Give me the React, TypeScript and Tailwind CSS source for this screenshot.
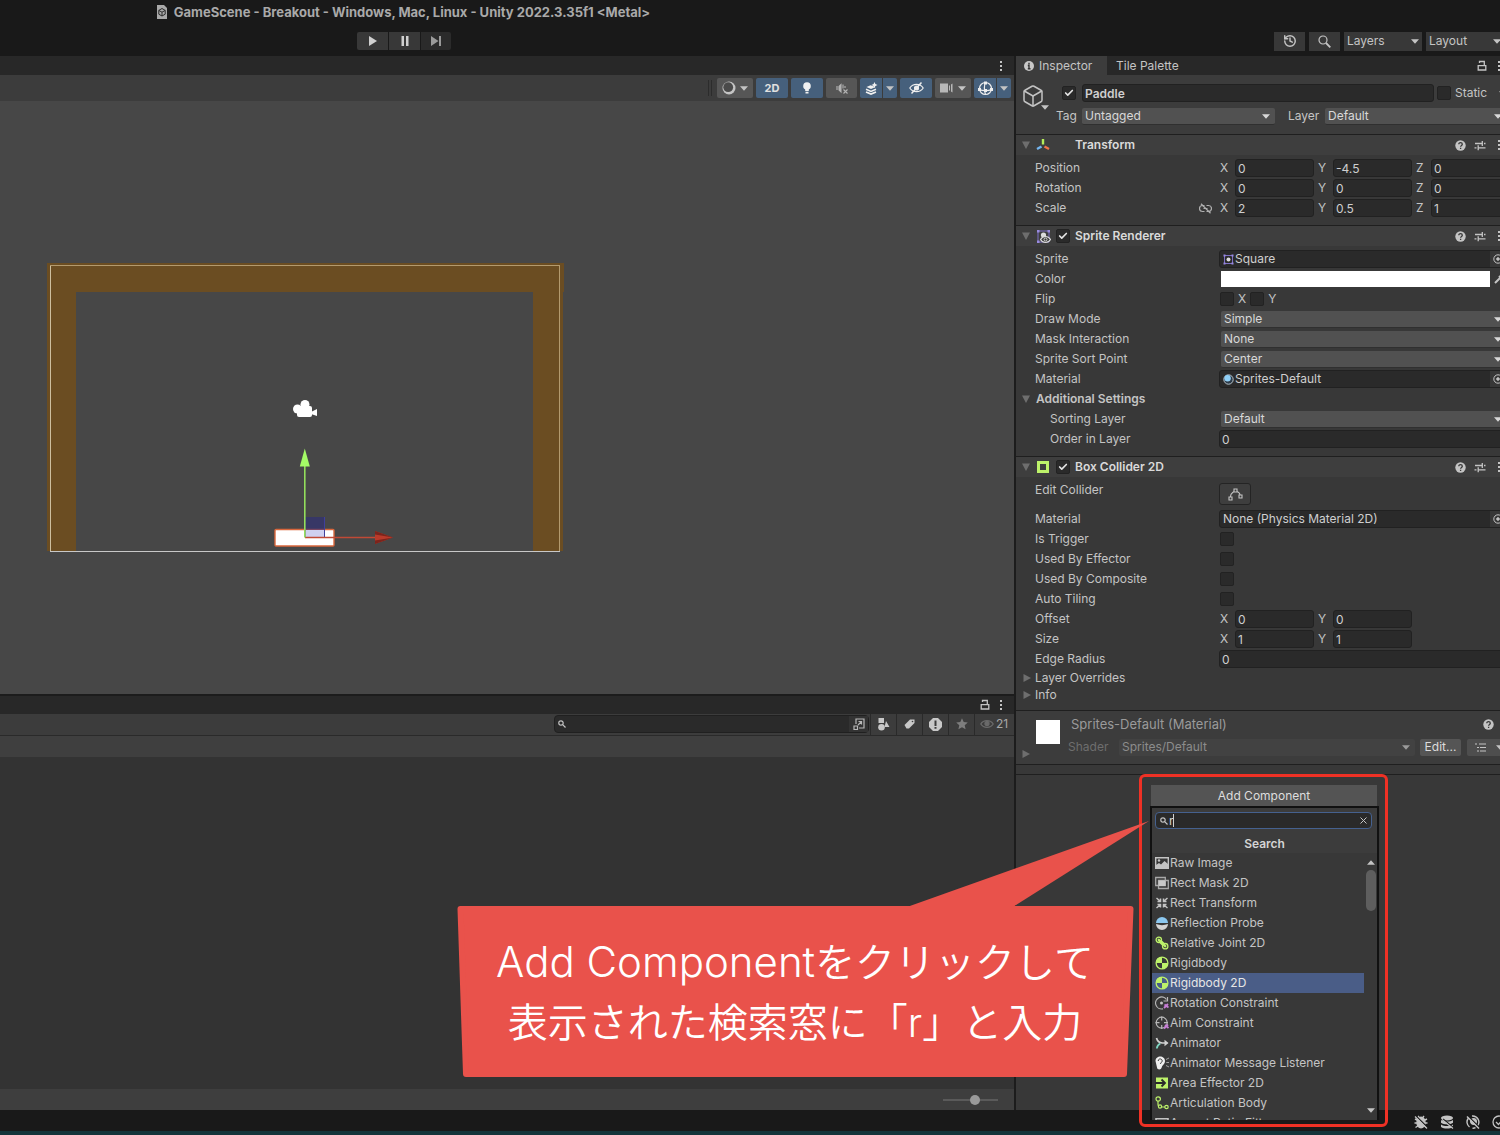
import type { ReactNode } from "react";
import { Box, Check, History } from "lucide-react";

/* ---------- small shared icons ---------- */

function Caret({ className = "" }: { className?: string }) {
  return (
    <svg className={`h-[5px] w-[8px] shrink-0 ${className}`} viewBox="0 0 8 5" fill="currentColor">
      <path d="M0 0.3h8L4 4.8z" />
    </svg>
  );
}

function Dots() {
  return (
    <svg className="h-[12px] w-[4px] shrink-0" viewBox="0 0 4 12" fill="currentColor">
      <rect x="1" y="1" width="2" height="2" />
      <rect x="1" y="5" width="2" height="2" />
      <rect x="1" y="9" width="2" height="2" />
    </svg>
  );
}

function Lock() {
  return (
    <svg className="h-[11px] w-[10px] shrink-0" viewBox="0 0 10 11" fill="none" stroke="currentColor" strokeWidth="1.3">
      <path d="M1.200 5.700h7.600v4.300H1.200z" />
      <path d="M2.500 3V1.500h4.800v4" />
    </svg>
  );
}

function Fold({ open = false }: { open?: boolean }) {
  return (
    <svg className="h-[10px] w-[10px] shrink-0 text-[#6e6e6e]" viewBox="0 0 10 10" fill="currentColor">
      {open ? <path d="M1 1.5h8L5 9z" /> : <path d="M1.5 1v8L9 5z" />}
    </svg>
  );
}

function HelpIcon() {
  return (
    <svg className="h-[11px] w-[11px]" viewBox="0 0 11 11">
      <circle cx="5.5" cy="5.5" r="5.2" fill="#c4c4c4" />
      <path d="M3.8 4.3c0-2.3 3.5-2.2 3.5 0 0 1.2-1.7 1.1-1.7 2.5M5.6 7.8v1.1" fill="none" stroke="#383838" strokeWidth="1.3" />
    </svg>
  );
}

function PresetIcon() {
  return (
    <svg className="h-[11px] w-[12px]" viewBox="0 0 12 11" fill="none" stroke="#c4c4c4" strokeWidth="1.3">
      <path d="M1 3.5h7M10 3.5h1.5M8.3 1v5M0.5 7.8h2M4.5 7.8h7M4.2 5.3v5" />
    </svg>
  );
}

function TinySearch() {
  return (
    <svg className="h-[8px] w-[8px] shrink-0" viewBox="0 0 8 8" fill="none" stroke="#c4c4c4" strokeWidth="1.2">
      <circle cx="3" cy="3" r="2.2" />
      <path d="M4.7 4.7L7.5 7.5" />
    </svg>
  );
}

function UnlinkIcon() {
  return (
    <svg className="h-[11px] w-[13px]" viewBox="0 0 13 11" fill="none" stroke="#b0b0b0" strokeWidth="1.2">
      <path d="M5.500 2.500H3.500a3 3 0 0 0 0 6h2M7.500 2.500h2a3 3 0 0 1 0 6h-2M4.500 5.500h4M2 0.800l9.500 9.400" />
    </svg>
  );
}

function SpriteIcon() {
  return (
    <svg className="h-[11px] w-[11px] shrink-0" viewBox="0 0 11 11">
      <path d="M1.5 1.5h8v8h-8z" fill="none" stroke="#7d6fc4" />
      <path d="M0.500 0.500h2v2h-2zM8.500 0.500h2v2h-2zM0.500 8.500h2v2h-2zM8.500 8.500h2v2h-2z" fill="#9a8be0" />
      <circle cx="5.5" cy="5.5" r="2" fill="#dcdcdc" />
    </svg>
  );
}

/* ---------- form controls ---------- */

function Tick({ id, checked = false, label }: { id: string; checked?: boolean; label?: string }) {
  return (
    <span className="relative inline-flex h-[14px] w-[14px] shrink-0">
      <input
        id={id}
        type="checkbox"
        aria-label={label}
        defaultChecked={checked}
        className="peer h-[14px] w-[14px] appearance-none rounded-[2px] border border-[#222222] bg-[#2a2a2a]"
      />
      <Check
        className="pointer-events-none absolute top-[2px] left-[2px] hidden h-[10px] w-[10px] text-[#e4e4e4] peer-checked:block"
        strokeWidth={4}
      />
    </span>
  );
}

function Dropdown({ id, value, label, className = "" }: { id: string; value: string; label?: string; className?: string }) {
  return (
    <span className={`relative flex h-[17px] items-center text-[#d8d8d8] ${className}`}>
      <select
        id={id}
        aria-label={label}
        className="h-[17px] w-full appearance-none rounded-[2px] border-b border-[#303030] bg-[#515151] pl-[3px] leading-[15px]"
      >
        <option>{value}</option>
      </select>
      <Caret className="pointer-events-none absolute right-[5px]" />
    </span>
  );
}

function TextBox({ id, value, label, className = "" }: { id: string; value: string; label?: string; className?: string }) {
  return (
    <input
      id={id}
      aria-label={label}
      defaultValue={value}
      className={`h-[18px] rounded-[3px] border border-[#212121] bg-[#2a2a2a] pl-[2px] text-[#cfcfcf] ${className}`}
    />
  );
}

function ObjectField({ id, value, icon }: { id: string; value: string; icon?: ReactNode }) {
  return (
    <span className="flex h-[18px] flex-1 rounded-[3px] border border-[#212121] bg-[#2a2a2a]">
      <span className="flex flex-1 items-center gap-px pl-[3px] text-[#cfcfcf]">
        {icon}
        {value}
      </span>
      <button id={id} aria-label={`Select ${value}`} className="flex w-[16px] items-center justify-center bg-[#373737]">
        <svg className="h-[10px] w-[10px]" viewBox="0 0 10 10" fill="none" stroke="#c4c4c4">
          <circle cx="5" cy="5" r="4.2" />
          <circle cx="5" cy="5" r="1.3" fill="#c4c4c4" />
        </svg>
      </button>
    </span>
  );
}

function Row({ id, label, indent = false, children }: { id: string; label: string; indent?: boolean; children: ReactNode }) {
  return (
    <div className="flex h-5 items-center pr-[5px] pl-[19px]">
      <label htmlFor={id} className={indent ? "w-[184px] shrink-0 pl-[15px]" : "w-[184px] shrink-0"}>
        {label}
      </label>
      {children}
    </div>
  );
}

function VectorRow({ id, label, values, linked = false }: { id: string; label: string; values: string[]; linked?: boolean }) {
  return (
    <div className="flex h-5 items-center pl-[19px]">
      <span className="flex w-[184px] shrink-0 items-center justify-between pr-[7px]">
        {label}
        {linked && <UnlinkIcon />}
      </span>
      <div className="flex gap-1 pl-px">
        {values.map((value, i) => (
          <div key={i} className="flex items-center">
            <label htmlFor={`${id}-${i}`} className="w-[15px]">
              {"XYZ"[i]}
            </label>
            <TextBox id={`${id}-${i}`} value={value} className="w-[79px]" />
          </div>
        ))}
      </div>
    </div>
  );
}

function Section({ title, icon, toggle, children }: { title: string; icon: ReactNode; toggle?: string; children: ReactNode }) {
  return (
    <section className="border-t border-[#1f1f1f] pb-[7px]">
      <header className="mb-[3px] flex h-5 items-center bg-[#3e3e3e] pl-[5px]">
        <Fold open />
        <span className="ml-[5px] flex w-[18px] items-center">{icon}</span>
        <span className="ml-[2px] flex w-[19px]">{toggle && <Tick id={toggle} checked label={`Enable ${title}`} />}</span>
        <h2 className="font-semibold text-[#dadada]">{title}</h2>
        <div className="ml-auto flex items-center gap-[8px] pr-[11px]">
          <HelpIcon />
          <PresetIcon />
          <span className="ml-[3px] flex">
            <Dots />
          </span>
        </div>
      </header>
      {children}
    </section>
  );
}

/* ---------- top bar ---------- */

function TopBar() {
  return (
    <header className="overflow-x-clip bg-[#191919] text-[#c4c4c4]">
      <div className="flex h-6 w-[806px] items-center justify-center gap-[6px] text-[13px] font-bold text-[#a9a9a9]">
        <svg className="h-[14px] w-[12px]" viewBox="0 0 12 14">
          <path d="M1 0h7l3 3v11H1z" fill="#a9a9a9" />
          <path d="M6 3.500l3.200 1.900v3.800L6 11 2.800 9.200V5.400zM6 7.200V11M6 7.200L2.800 5.400M6 7.200l3.200-1.800" fill="none" stroke="#2a2a2a" />
        </svg>
        <h1>GameScene - Breakout - Windows, Mac, Linux - Unity 2022.3.35f1 &lt;Metal&gt;</h1>
      </div>
      <div className="flex h-8 items-center justify-between pt-0.5">
        <div className="flex w-[808px] justify-center gap-px">
          <button aria-label="Play" className="flex h-[18px] w-[31px] items-center justify-center rounded-l-[2px] bg-[#383838]">
            <svg className="h-[10px] w-[10px]" viewBox="0 0 10 10" fill="#d0d0d0">
              <path d="M1 0l8 5-8 5z" />
            </svg>
          </button>
          <button aria-label="Pause" className="flex h-[18px] w-[31px] items-center justify-center bg-[#383838]">
            <svg className="h-[10px] w-[10px]" viewBox="0 0 10 10" fill="#d0d0d0">
              <path d="M1.500 0h2.500v10H1.500zM6 0h2.500v10H6z" />
            </svg>
          </button>
          <button aria-label="Step" className="flex h-[18px] w-[30px] items-center justify-center rounded-r-[2px] bg-[#2b2b2b]">
            <svg className="h-[10px] w-[12px]" viewBox="0 0 12 10" fill="#9a9a9a">
              <path d="M1 0l7.500 5L1 10zM9 0h2v10H9z" />
            </svg>
          </button>
        </div>
        <div className="mr-[-4px] flex shrink-0 gap-1">
          <button aria-label="Undo history" className="flex h-[19px] w-[31px] items-center justify-center bg-[#383838]">
            <History className="h-[14px] w-[14px]" strokeWidth={2.5} />
          </button>
          <button aria-label="Search" className="flex h-[19px] w-[31px] items-center justify-center bg-[#383838]">
            <svg className="h-[13px] w-[13px]" viewBox="0 0 13 13" fill="none" stroke="#c4c4c4">
              <circle cx="5" cy="5" r="4" strokeWidth="1.200" />
              <path d="M8 8l4.300 4.300" strokeWidth="1.800" />
            </svg>
          </button>
          {["Layers", "Layout"].map((name) => (
            <span key={name} className="relative flex w-[78px] items-center">
              <select aria-label={name} className="h-[19px] w-full appearance-none bg-[#383838] pl-[3px]">
                <option>{name}</option>
              </select>
              <Caret className="pointer-events-none absolute right-[3px]" />
            </span>
          ))}
        </div>
      </div>
    </header>
  );
}

/* ---------- scene view ---------- */

function SceneToolbar() {
  return (
    <div className="flex h-[26px] items-center justify-end gap-[3px] bg-[#3c3c3c] pr-[3px] text-[#c4c4c4]">
      <span className="mr-[2px] h-[16px] w-[4px] border-x border-[#2c2c2c]" />
      <button aria-label="Draw mode" className="flex h-5 w-[36px] items-center justify-center gap-1 rounded-[2px] bg-[#565656]">
        <svg className="h-[14px] w-[14px]" viewBox="0 0 14 14">
          <circle cx="7" cy="7" r="6.500" fill="#c4c4c4" />
          <circle cx="6.200" cy="6.200" r="4.900" fill="#4a4a4a" />
        </svg>
        <Caret />
      </button>
      <button className="h-5 w-[32px] rounded-[2px] bg-[#46607c] text-[11px] font-bold text-[#e0e0e0]">2D</button>
      <button aria-label="Lighting" className="flex h-5 w-[32px] items-center justify-center rounded-[2px] bg-[#46607c]">
        <svg className="h-[12px] w-[10px]" viewBox="0 0 10 12" fill="#f0f0f0">
          <circle cx="5" cy="4" r="3.800" />
          <path d="M3.200 6h3.600v3H3.200zM3.500 9.800h3v1.800h-3z" />
        </svg>
      </button>
      <button aria-label="Audio" className="flex h-5 w-[31px] items-center justify-center rounded-[2px] bg-[#565656]">
        <svg className="h-[11px] w-[12px]" viewBox="0 0 12 11" fill="none" stroke="#b4b4b4" strokeWidth="1.100">
          <path d="M1 3v4M3 3.500l2-2v7.500l-2-2z" fill="#b4b4b4" />
          <path d="M7 1.500v4M7.500 6.500l4 4M11.500 6.500l-4 4M9 3v2" />
        </svg>
      </button>
      <div className="flex gap-px">
        <button aria-label="Effects" className="flex h-5 w-[22px] items-center justify-center rounded-l-[2px] bg-[#46607c]">
          <svg className="h-[13px] w-[13px]" viewBox="0 0 13 13" fill="none" stroke="#f0f0f0" strokeWidth="1.600">
            <path d="M5.500 3.200L1.500 5 6 7l4.500-2z" fill="#f0f0f0" stroke="none" />
            <path d="M1 7.200l5 2.200 5-2.200M1 9.900l5 2.200 5-2.200" />
            <path d="M9.500 0l.9 2.100 2.100.9-2.100.9-.9 2.100-.9-2.100L6.500 3l2.100-.9z" fill="#f0f0f0" stroke="none" />
          </svg>
        </button>
        <button aria-label="Effects options" className="flex h-5 w-[14px] items-center justify-center rounded-r-[2px] bg-[#46607c]">
          <Caret />
        </button>
      </div>
      <button aria-label="Scene visibility" className="flex h-5 w-[32px] items-center justify-center rounded-[2px] bg-[#46607c]">
        <svg className="h-[12px] w-[15px]" viewBox="0 0 15 12" fill="none" stroke="#eeeeee" strokeWidth="1.200">
          <path d="M0.800 6C4 1.200 11 1.200 14.200 6 11 10.800 4 10.800 0.800 6z" />
          <circle cx="7.500" cy="6" r="2" fill="#eeeeee" />
          <path d="M2.500 11.500l10-11" strokeWidth="1.500" />
        </svg>
      </button>
      <button aria-label="Scene camera" className="flex h-5 w-[36px] items-center justify-center gap-[5px] rounded-[2px] bg-[#565656]">
        <svg className="h-[10px] w-[13px]" viewBox="0 0 13 10" fill="#b8b8b8">
          <path d="M0 0.500h8v9H0zM9 3l1-1v6L9 7zM11 1.500l1.500-1v9l-1.500-1z" />
        </svg>
        <Caret />
      </button>
      <div className="flex gap-px">
        <button aria-label="Gizmos" className="flex h-5 w-[22px] items-center justify-center rounded-l-[2px] bg-[#46607c]">
          <svg className="h-[15px] w-[15px]" viewBox="0 0 15 15" fill="none" stroke="#eeeeee" strokeWidth="1.200">
            <circle cx="7.500" cy="7.500" r="6" />
            <path d="M1.500 8.500c3 1.500 9 1.500 12 0M7.500 1.500c-1.500 2-1.500 8 0 12" />
            <path d="M6 0.500h3v3H6zM0 7h3v3H0zM12 7h3v3h-3zM6 8h3v3H6z" fill="#eeeeee" stroke="none" />
          </svg>
        </button>
        <button aria-label="Gizmo options" className="flex h-5 w-[14px] items-center justify-center rounded-r-[2px] bg-[#46607c]">
          <Caret />
        </button>
      </div>
    </div>
  );
}

function SceneCanvas() {
  return (
    <svg className="min-h-[480px] w-full flex-[592_1_0px] bg-[#474747]">
      {/* walls */}
      <path d="M47 162h517v29h-1v259h-30V191H76v259H47z" fill="#6b4d22" />
      {/* camera bounds */}
      <path d="M50 164.500h510M559.500 165v285" stroke="#b39a6e" />
      <path d="M50 450.500h510" stroke="#c8c8c8" />
      <path d="M50.500 165v285" stroke="#cdbf9f" />
      {/* camera gizmo */}
      <g fill="#ffffff">
        <circle cx="305" cy="303.500" r="4.500" />
        <circle cx="297.500" cy="308" r="4.500" />
        <rect x="297" y="305" width="15" height="11" rx="2" />
        <path d="M311 311l6-3v7l-6-2z" />
      </g>
      {/* paddle and move handles */}
      <rect x="275" y="428.500" width="59" height="16.500" rx="1" fill="#ffffff" stroke="#d9673c" strokeWidth="1.400" />
      <rect x="305" y="416" width="20" height="20" fill="#2a2a80" fillOpacity="0.550" />
      <rect x="306" y="429" width="18" height="7" fill="#cfd0f0" />
      <path d="M324.500 416v20" stroke="#3f3f9c" />
      <path d="M305 436.500h72" stroke="#c04a36" strokeWidth="1.600" />
      <path d="M375 430l18 6.500-18 6.500z" fill="#b93a2a" />
      <path d="M375 430l18 6.500-18-3zM375 443l18-6.500-18 3z" fill="#7c241c" />
      <path d="M304.800 436.500V364" stroke="#93dd5c" strokeWidth="1.600" />
      <path d="M304.800 347.500l5 18h-10z" fill="#a4fb66" />
    </svg>
  );
}

/* ---------- project browser ---------- */

function ProjectPanel() {
  return (
    <>
      <div className="flex h-[20px] items-center justify-end gap-[9px] border-t-2 border-[#1c1c1c] bg-[#282828] pr-[11px] text-[#c4c4c4]">
        <Lock />
        <Dots />
      </div>
      <div className="flex h-[22px] items-center justify-end border-b border-[#2a2a2a] bg-[#3c3c3c] text-[#c4c4c4]">
        <div className="mr-px flex h-[18px] w-[315px] items-center gap-1 rounded-[4px] border border-[#202020] bg-[#2a2a2a] pl-[3px]">
          <TinySearch />
          <input aria-label="Search project" className="h-[16px] min-w-0 flex-1" />
          <button aria-label="Open search window" className="flex h-[16px] w-[19px] items-center justify-center bg-[#333333]">
            <svg className="h-[12px] w-[12px]" viewBox="0 0 12 12" fill="none" stroke="#b8b8b8" strokeWidth="1.200">
              <path d="M3 6V1h8v9H6M1 8h3.500v3.500H1zM5 7l3.500-3.500M5.500 3.500h3v3" />
            </svg>
          </button>
        </div>
        <button aria-label="Filter by type" className="flex h-[21px] w-[26px] items-center justify-center border-l border-[#2a2a2a]">
          <svg className="h-[13px] w-[13px]" viewBox="0 0 13 13" fill="#c8c8c8">
            <path d="M1.500 0H7v5H1.500zM9 3l3.500 6H7.500z" />
            <circle cx="4.500" cy="9.300" r="3.300" />
          </svg>
        </button>
        <button aria-label="Filter by label" className="flex h-[21px] w-[26px] items-center justify-center border-l border-[#2a2a2a]">
          <svg className="h-[10px] w-[11px]" viewBox="0 0 11 10">
            <path d="M0.500 6L6 0.500h4.500V4L5 9.500H2.500z" fill="#c8c8c8" />
            <circle cx="8.500" cy="2.500" r="0.800" fill="#3c3c3c" />
          </svg>
        </button>
        <button aria-label="Filter by log" className="flex h-[21px] w-[26px] items-center justify-center border-l border-[#2a2a2a]">
          <svg className="h-[13px] w-[13px]" viewBox="0 0 13 13">
            <path d="M4 0h5l4 4v5l-4 4H4L0 9V4z" fill="#c8c8c8" />
            <path d="M5.500 2.500h2V8h-2zM5.500 9h2v1.800h-2z" fill="#3c3c3c" />
          </svg>
        </button>
        <button aria-label="Favorites" className="flex h-[21px] w-[26px] items-center justify-center border-l border-[#2a2a2a]">
          <svg className="h-[12px] w-[12px]" viewBox="0 0 12 12" fill="#7d7d7d">
            <path d="M6 0.300l1.700 3.800 4.100.4-3.100 2.700.9 4.100L6 9.200l-3.600 2.100.9-4.100L.2 4.500l4.100-.4z" />
          </svg>
        </button>
        <button className="flex h-[21px] w-[40px] items-center gap-[2px] border-l border-[#2a2a2a] pl-[5px] text-[#a8a8a8]">
          <svg className="h-[10px] w-[14px]" viewBox="0 0 14 10" fill="none" stroke="#6a6a6a" strokeWidth="1.300">
            <path d="M0.800 5C3.500.5 10.500.5 13.200 5 10.500 9.500 3.500 9.500.8 5z" />
            <circle cx="7" cy="4.500" r="2" fill="#6a6a6a" />
          </svg>
          21
        </button>
      </div>
      <div className="h-[21px] bg-[#3f3f3f]" />
      <div className="flex-[332_1_0px] bg-[#333333]" />
      <div className="flex h-[21px] items-center justify-end bg-[#3e3e3e] pr-[16px]">
        <input
          type="range"
          aria-label="Icon size"
          defaultValue={60}
          className="h-[10px] w-[55px] appearance-none bg-transparent [&::-webkit-slider-runnable-track]:h-[2px] [&::-webkit-slider-runnable-track]:bg-[#5a5a5a] [&::-webkit-slider-thumb]:mt-[-4px] [&::-webkit-slider-thumb]:h-[10px] [&::-webkit-slider-thumb]:w-[10px] [&::-webkit-slider-thumb]:appearance-none [&::-webkit-slider-thumb]:rounded-full [&::-webkit-slider-thumb]:bg-[#9a9a9a]"
        />
      </div>
    </>
  );
}

/* ---------- add component menu ---------- */

const lime = "#bdf26a";

const components: { name: string; icon: ReactNode }[] = [
  {
    name: "Raw Image",
    icon: (
      <>
        <path d="M0.700 1.700h12.600v10.600H0.700z" fill="none" stroke="#c4c4c4" strokeWidth="1.400" />
        <path d="M1 12V9l3-2 2 1.500L9.500 5 13 8v4z" fill="#c4c4c4" />
        <circle cx="4" cy="4.500" r="1.200" fill="#c4c4c4" />
      </>
    ),
  },
  {
    name: "Rect Mask 2D",
    icon: (
      <>
        <path d="M0.700 1.500h9.600v8H0.700zM3.500 4.500h9.800v8H3.500z" fill="none" stroke="#a8a8a8" strokeWidth="1.300" />
        <path d="M3.500 4.500h7v5.500h-7z" fill="#c8c8c8" />
      </>
    ),
  },
  {
    name: "Rect Transform",
    icon: (
      <path
        d="M1.500 2l3.500 3M12.500 2L9 5M1.500 12L5 9M12.500 12L9 9M5.500 2.500v3h-3M8.500 2.500v3h3M5.500 11.500v-3h-3M8.500 11.500v-3h3"
        fill="none"
        stroke="#c4c4c4"
        strokeWidth="1.500"
      />
    ),
  },
  {
    name: "Reflection Probe",
    icon: (
      <>
        <path d="M1 7a6 6 0 0 1 12 0z" fill="#8cc8f0" />
        <path d="M1 8c4 1.500 8 1.500 12 0a6 6 0 0 1-12 0z" fill="#d4d4d4" />
      </>
    ),
  },
  {
    name: "Relative Joint 2D",
    icon: (
      <>
        <path d="M4 4l6 6" stroke={lime} strokeWidth="3.500" />
        <circle cx="3.800" cy="3.800" r="2.700" fill="#383838" stroke={lime} strokeWidth="1.300" />
        <circle cx="10.200" cy="10.200" r="2.700" fill="#383838" stroke={lime} strokeWidth="1.300" />
        <path d="M3.800 3.800l6.400 6.400" stroke={lime} strokeWidth="2.400" strokeLinecap="round" />
      </>
    ),
  },
  { name: "Rigidbody", icon: <BodyGlyph /> },
  { name: "Rigidbody 2D", icon: <BodyGlyph /> },
  {
    name: "Rotation Constraint",
    icon: (
      <>
        <path d="M11.500 3.500A6 6 0 1 0 8 12.800" fill="none" stroke="#b8b8b8" strokeWidth="1.200" />
        <path d="M12.500 1v4H8.500" fill="none" stroke="#b8b8b8" strokeWidth="1.200" />
        <circle cx="6.500" cy="7" r="1.500" fill="#c4c4c4" />
        <path d="M9 12l4-4M9.500 8.500l4 3" stroke="#c77fd6" strokeWidth="1.800" />
      </>
    ),
  },
  {
    name: "Aim Constraint",
    icon: (
      <>
        <circle cx="6.700" cy="6.700" r="5.500" fill="none" stroke="#b8b8b8" strokeWidth="1.200" />
        <path d="M6.700 0.500v4M6.700 9v4M0.500 6.700h4M9 6.700h4" stroke="#b8b8b8" strokeWidth="1.200" />
        <path d="M9 12.500l4-4M10 9l3.500 3" stroke="#c77fd6" strokeWidth="1.800" />
      </>
    ),
  },
  {
    name: "Animator",
    icon: (
      <>
        <path d="M1.500 2c1 3.500 3 5 6 5h5" fill="none" stroke="#d0d0d0" strokeWidth="1.700" />
        <path d="M9.500 3.800L13.500 7l-4 3.200z" fill="#d0d0d0" />
        <path d="M1.800 12.500c.3-2.500 1.500-4 3.500-5" fill="none" stroke="#7fd6c2" strokeWidth="1.800" />
      </>
    ),
  },
  {
    name: "Animator Message Listener",
    icon: (
      <>
        <path d="M0.500 5c0-6 9.500-6 9.500 0 0 3-2.800 4-3.300 6.500-.6 2.800-4.700 2.200-4.700 0z" fill="#eeeeee" />
        <path d="M3.200 5c0-3 4.200-2.500 4 0-.2 1.500-1.700 1.500-1.700 3" fill="none" stroke="#383838" />
        <path d="M11 3.500l3-1.500M11.300 6.500h2.700M11 9.500l3 1.500" stroke="#a0a0a0" />
      </>
    ),
  },
  {
    name: "Area Effector 2D",
    icon: (
      <>
        <path d="M1 1.500h12v11H1z" fill={lime} />
        <path d="M0 7h9.500M6.500 3.500L10 7l-3.500 3.500" fill="none" stroke="#2b2b2b" strokeWidth="1.800" />
      </>
    ),
  },
  {
    name: "Articulation Body",
    icon: (
      <>
        <path d="M3 4v4.500c0 1.500 1 2.500 3 2.500h4" fill="none" stroke={lime} strokeWidth="1.200" />
        <circle cx="3.200" cy="3" r="2.200" fill="#383838" stroke={lime} strokeWidth="1.200" />
        <circle cx="5" cy="10.500" r="1.600" fill="#383838" stroke={lime} strokeWidth="1.200" />
        <circle cx="11.500" cy="11" r="1.700" fill="#383838" stroke={lime} strokeWidth="1.200" />
      </>
    ),
  },
  { name: "Aspect Ratio Fitter", icon: <path d="M1 2.700h12v9H1z" fill="none" stroke="#c4c4c4" strokeWidth="1.600" /> },
];

function BodyGlyph() {
  return (
    <>
      <circle cx="7" cy="7" r="5.900" fill="none" stroke={lime} strokeWidth="1.300" />
      <path d="M7 7V1a6 6 0 0 0-6 6zM7 7v6a6 6 0 0 0 6-6z" fill={lime} />
    </>
  );
}

function AddComponent() {
  return (
    <div className="relative z-10 mx-auto mt-[10px] w-[226px]">
      <button className="block h-[21px] w-full bg-[#545454] text-[#dedede]">Add Component</button>
      <div className="absolute top-full left-[-1px] flex h-[314px] w-[229px] flex-col border-2 border-b-0 border-[#111111] bg-[#383838]">
        <div className="bg-[#3c3c3c] pt-[4px]">
          <label className="relative mr-[5px] ml-[3px] flex h-[17px] items-center rounded-[4px] border border-[#45618f] bg-[#2a2a2a] px-[4px]">
            <TinySearch />
            <input aria-label="Search components" defaultValue="r" className="h-[15px] min-w-0 flex-1 pl-px text-[#d8d8d8]" />
            <span className="absolute left-[17px] h-[13px] w-px bg-[#d0d0d0]" />
            <button aria-label="Clear search" className="flex">
              <svg className="h-[7px] w-[7px]" viewBox="0 0 7 7" stroke="#c4c4c4">
                <path d="M0.500 0.500l6 6M6.500 0.500l-6 6" />
              </svg>
            </button>
          </label>
          <h3 className="flex h-[24px] items-center justify-center pt-[6px] font-semibold text-[#d4d4d4]">Search</h3>
        </div>
        <div className="flex min-h-0 flex-1">
          <ul className="flex-1 overflow-hidden">
            {components.map((item) => (
              <li key={item.name}>
                <button
                  className={
                    item.name === "Rigidbody 2D"
                      ? "flex h-5 w-full items-center gap-px bg-[#4a5d87] pl-[3px] text-[#e6e6e6]"
                      : "flex h-5 w-full items-center gap-px pl-[3px] text-[#c4c4c4]"
                  }
                >
                  <svg className="h-[14px] w-[14px] shrink-0" viewBox="0 0 14 14">
                    {item.icon}
                  </svg>
                  {item.name}
                </button>
              </li>
            ))}
          </ul>
          <div className="flex w-[13px] flex-col items-center gap-[5px] py-[7px] text-[#c4c4c4]">
            <Caret className="rotate-180" />
            <span className="h-[41px] w-[10px] rounded-[5px] bg-[#5e5e5e]" />
            <Caret className="mt-auto" />
          </div>
        </div>
      </div>
      {/* highlight frame */}
      <div className="pointer-events-none absolute top-[-11px] left-[-12px] h-[353px] w-[249px] rounded-[6px] border-3 border-[#ef3125]" />
    </div>
  );
}

/* ---------- inspector ---------- */

function ObjectHeader() {
  return (
    <div className="flex h-[59px] bg-[#3c3c3c] pt-[9px]">
      <div className="relative w-[36px] pl-[5px]">
        <Box className="h-[24px] w-[24px]" strokeWidth={1.5} />
        <Caret className="absolute top-[21px] right-[3px]" />
      </div>
      <div className="flex-1">
        <div className="flex h-[18px] items-center pl-[10px]">
          <Tick id="active" checked label="Active" />
          <TextBox id="name" label="Name" value="Paddle" className="ml-[6px] w-[352px] font-semibold" />
          <span className="ml-[3px] flex items-center gap-[4px]">
            <Tick id="static" />
            <label htmlFor="static">Static</label>
          </span>
          <Caret className="ml-[12px]" />
        </div>
        <div className="mt-[5px] flex h-[18px] items-center pr-[5px]">
          <label htmlFor="tag" className="w-[30px] pl-[4px]">
            Tag
          </label>
          <Dropdown id="tag" value="Untagged" className="w-[193px]" />
          <label htmlFor="layer" className="w-[50px] pl-[13px]">
            Layer
          </label>
          <Dropdown id="layer" value="Default" className="flex-1" />
        </div>
      </div>
    </div>
  );
}

function MaterialBlock() {
  return (
    <section className="flex h-[55px] border-y border-[#1f1f1f] bg-[#3c3c3c] pt-[4px]">
      <div className="flex w-[50px] pl-[5px]">
        <span className="flex items-end pb-[5px]">
          <Fold />
        </span>
        <span className="mt-[5px] ml-[5px] h-[24px] w-[24px] bg-white" />
      </div>
      <div className="flex-1 text-[#9a9a9a]">
        <div className="flex h-[18px] items-center justify-between pr-[18px] pl-[5px] text-[13px]">
          <h2>Sprites-Default (Material)</h2>
          <HelpIcon />
        </div>
        <div className="mt-[5px] flex h-[18px] items-center">
          <label htmlFor="shader" className="w-[53px] pl-[2px] text-[#6e6e6e]">
            Shader
          </label>
          <span className="relative flex w-[296px] items-center">
            <select
              id="shader"
              disabled
              className="h-[17px] w-full appearance-none rounded-[2px] bg-[#424242] pl-[3px] text-[#8c8c8c] opacity-100"
            >
              <option>Sprites/Default</option>
            </select>
            <Caret className="pointer-events-none absolute right-[5px]" />
          </span>
          <button className="ml-[5px] h-[17px] w-[41px] rounded-[2px] bg-[#555555] text-[#dcdcdc]">Edit...</button>
          <button
            aria-label="Shader options"
            className="ml-[6px] flex h-[17px] w-[40px] items-center gap-[9px] rounded-[2px] bg-[#4e4e4e] pl-[8px] text-[#c4c4c4]"
          >
            <svg className="h-[9px] w-[12px]" viewBox="0 0 12 9" fill="none" stroke="currentColor" strokeWidth="1.200">
              <path d="M0 1h2M4 1h7M2 4.500h2M5 4.500h6M2 8h2M5 8h6" />
            </svg>
            <Caret />
          </button>
        </div>
      </div>
    </section>
  );
}

function Inspector() {
  return (
    <aside className="w-[486px] shrink-0 overflow-x-clip border-l-2 border-[#1c1c1c] bg-[#383838] text-[#c4c4c4]">
      <div className="w-[496px]">
        <div className="flex h-[19px] items-center bg-[#282828]">
          <button className="flex h-full w-[91px] items-center gap-[5px] bg-[#3c3c3c] pl-[8px]">
            <svg className="h-[10px] w-[10px]" viewBox="0 0 10 10">
              <circle cx="5" cy="5" r="5" fill="#c8c8c8" />
              <path d="M5 1.800v1.700M3.800 4.500H5v3M3.800 7.700h2.700" stroke="#333333" strokeWidth="1.400" fill="none" />
            </svg>
            Inspector
          </button>
          <button className="pl-[9px]">Tile Palette</button>
          <span className="ml-auto flex items-center gap-[10px] pr-[11px]">
            <Lock />
            <Dots />
          </span>
        </div>
        <ObjectHeader />

        <Section
          title="Transform"
          icon={
            <svg className="h-[14px] w-[14px]" viewBox="0 0 14 14" fill="none" strokeWidth="2.400">
              <path d="M7 1v5.500" stroke="#b5ee5a" />
              <path d="M5.500 8.500L1 11" stroke="#74b6f0" />
              <path d="M8.500 8.500L13 11" stroke="#f0734a" />
            </svg>
          }
        >
          <VectorRow id="position" label="Position" values={["0", "-4.5", "0"]} />
          <VectorRow id="rotation" label="Rotation" values={["0", "0", "0"]} />
          <VectorRow id="scale" label="Scale" values={["2", "0.5", "1"]} linked />
        </Section>

        <Section
          title="Sprite Renderer"
          toggle="sprite-enabled"
          icon={
            <svg className="h-[15px] w-[15px]" viewBox="0 0 15 15">
              <path d="M2 2h11v11H2z" fill="none" stroke="#7d6fc4" />
              <path d="M1 1h2.500v2.500H1zM11.500 1H14v2.500h-2.500zM1 11.500h2.500V14H1z" fill="#9a8be0" />
              <circle cx="7.500" cy="6" r="2.600" fill="#dcdcdc" />
              <path d="M4.500 10.500c2.500-4 7.500-4 10 0-2.500 4-7.500 4-10 0z" fill="#383838" stroke="#dcdcdc" strokeWidth="1.200" />
              <circle cx="9.500" cy="10.500" r="1.500" fill="#383838" stroke="#dcdcdc" />
            </svg>
          }
        >
          <Row id="sprite" label="Sprite">
            <ObjectField id="sprite" value="Square" icon={<SpriteIcon />} />
          </Row>
          <Row id="color" label="Color">
            <button id="color" aria-label="Color" className="ml-[2px] h-[16px] w-[269px] bg-white" />
            <svg className="ml-[4px] h-[10px] w-[10px]" viewBox="0 0 10 10" fill="none" stroke="#c4c4c4" strokeWidth="2">
              <path d="M1 9l5-5M5 2l3 3M7 3l2-2" />
            </svg>
          </Row>
          <Row id="flip-x" label="Flip">
            <div className="flex items-center gap-[4px] pl-px">
              <Tick id="flip-x" />
              <label htmlFor="flip-x">X</label>
              <Tick id="flip-y" />
              <label htmlFor="flip-y">Y</label>
            </div>
          </Row>
          <Row id="draw-mode" label="Draw Mode">
            <Dropdown id="draw-mode" value="Simple" className="ml-[2px] flex-1" />
          </Row>
          <Row id="mask" label="Mask Interaction">
            <Dropdown id="mask" value="None" className="ml-[2px] flex-1" />
          </Row>
          <Row id="sort-point" label="Sprite Sort Point">
            <Dropdown id="sort-point" value="Center" className="ml-[2px] flex-1" />
          </Row>
          <Row id="material" label="Material">
            <ObjectField
              id="material"
              value="Sprites-Default"
              icon={
                <svg className="h-[11px] w-[11px] shrink-0" viewBox="0 0 11 11">
                  <circle cx="5.500" cy="5.500" r="4.700" fill="#2b3a48" stroke="#b8c4cc" />
                  <circle cx="4.600" cy="4.300" r="3.200" fill="#8fd0f8" />
                </svg>
              }
            />
          </Row>
          <div className="flex h-5 items-center gap-[5px] pl-[5px]">
            <Fold open />
            <h3 className="font-semibold">Additional Settings</h3>
          </div>
          <Row id="sorting-layer" label="Sorting Layer" indent>
            <Dropdown id="sorting-layer" value="Default" className="ml-[2px] flex-1" />
          </Row>
          <Row id="order" label="Order in Layer" indent>
            <TextBox id="order" value="0" className="flex-1" />
          </Row>
        </Section>

        <Section
          title="Box Collider 2D"
          toggle="box-enabled"
          icon={
            <svg className="h-[14px] w-[14px]" viewBox="0 0 14 14">
              <path d="M2.500 2.500h9v9h-9z" fill="none" stroke={lime} strokeWidth="3" />
            </svg>
          }
        >
          <div className="flex h-[29px] pl-[19px]">
            <label htmlFor="edit-collider" className="flex h-5 w-[184px] items-center">
              Edit Collider
            </label>
            <button
              id="edit-collider"
              aria-label="Edit Collider"
              className="my-[3px] flex h-[22px] w-[32px] items-center justify-center rounded-[3px] border border-[#242424] bg-[#3e3e3e]"
            >
              <svg className="h-[13px] w-[15px]" viewBox="0 0 15 13" fill="none" stroke="#c4c4c4" strokeWidth="1.100">
                <path d="M2.500 8.500C2.500 5 4.500 5 6 3.500M9 3.500c1.500 1 3 1.500 3 3M1 9h3v3H1zM6 1h3v3H6zM11 7h3v3h-3z" />
              </svg>
            </button>
          </div>
          <Row id="physics-material" label="Material">
            <ObjectField id="physics-material" value="None (Physics Material 2D)" />
          </Row>
          {["Is Trigger", "Used By Effector", "Used By Composite", "Auto Tiling"].map((name) => (
            <Row key={name} id={name} label={name}>
              <span className="flex pl-px">
                <Tick id={name} />
              </span>
            </Row>
          ))}
          <VectorRow id="offset" label="Offset" values={["0", "0"]} />
          <VectorRow id="size" label="Size" values={["1", "1"]} />
          <Row id="edge-radius" label="Edge Radius">
            <TextBox id="edge-radius" value="0" className="flex-1" />
          </Row>
          {["Layer Overrides", "Info"].map((name) => (
            <button key={name} className="flex h-[17px] w-full items-center gap-[3px] pl-[6px]">
              <Fold />
              {name}
            </button>
          ))}
        </Section>

        <MaterialBlock />
        <div className="mb-px h-[10px] border-b border-[#1f1f1f]" />
        <AddComponent />
      </div>
    </aside>
  );
}

/* ---------- annotation ---------- */

function Callout() {
  return (
    <div className="absolute top-[820px] right-[349px] z-20 h-[258px] w-[694px]">
      <svg className="absolute inset-0 h-full w-full" viewBox="0 0 694 258" fill="#e9524b">
        <path d="M3.500 89h670l-6.500 165H9z" stroke="#e9524b" strokeWidth="6" strokeLinejoin="round" />
        <path d="M450 87L692 1 556 87z" />
      </svg>
      <p className="relative pt-[112px] pr-[18px] text-center font-[Inter,'Noto_Sans_CJK_JP',sans-serif] text-[40px] leading-[60px] font-[350] text-white">
        <span className="text-[42px]">Add Component</span>をクリックして
        <br />
        表示された検索窓に「r」と入力
      </p>
    </div>
  );
}

/* ---------- status bar ---------- */

function StatusBar() {
  return (
    <footer className="overflow-x-clip border-b-4 border-[#14343a] bg-[#191919]">
      <div className="mr-[-6px] flex h-[21px] items-center justify-end gap-[12px] pt-[3px] text-[#c4c4c4]">
        <svg className="h-[14px] w-[14px]" viewBox="0 0 14 14" fill="none" stroke="#c4c4c4" strokeWidth="1.400">
          <ellipse cx="7" cy="7.500" rx="4" ry="5.300" fill="#c4c4c4" />
          <path d="M1 4l3 1.500M0.500 8H4M1.500 12.500l3-2M13 4l-3 1.500M13.500 8H10M12.500 12.500l-3-2M4 1l1.500 2M10 1L8.500 3" />
          <path d="M2 1l12 12" stroke="#191919" strokeWidth="1.300" />
          <path d="M1 1.500l12 12" strokeWidth="1.200" />
        </svg>
        <svg className="h-[14px] w-[14px]" viewBox="0 0 14 14" fill="#c4c4c4">
          <ellipse cx="7" cy="3" rx="6" ry="2.400" />
          <path d="M1 5c3 2 9 2 12 0v2.700c-3 2-9 2-12 0zM1 9.500c3 2 9 2 12 0V12c-3 2-9 2-12 0z" />
          <path d="M3 4l11 9" stroke="#191919" strokeWidth="1.300" />
          <path d="M2 4.500l11 9" stroke="#c4c4c4" strokeWidth="1.200" />
        </svg>
        <svg className="h-[14px] w-[14px]" viewBox="0 0 14 14" fill="none" stroke="#c4c4c4" strokeWidth="1.400">
          <path d="M3.500 12A6.200 6.200 0 0 1 2.500 3M6 1a6.200 6.200 0 0 1 5.500 10M6.500 13.200c1 .1 2 0 3-.500" />
          <circle cx="7.500" cy="6.500" r="2.800" fill="#c4c4c4" />
          <path d="M2 1l12 12" stroke="#191919" strokeWidth="1.300" />
          <path d="M1 1.500l12 12" strokeWidth="1.500" />
        </svg>
        <svg className="h-[14px] w-[14px]" viewBox="0 0 14 14" fill="none" stroke="#c4c4c4" strokeWidth="1.300">
          <circle cx="7" cy="7" r="6" />
          <path d="M4 7l2.500 2.500L10.500 5" />
        </svg>
      </div>
    </footer>
  );
}

export default function App() {
  return (
    <div className="relative flex min-h-screen flex-col overflow-x-clip bg-[#191919] font-[Inter,'Noto_Sans_CJK_JP',sans-serif] text-[12px] leading-[16px]">
      <TopBar />
      <main className="flex flex-1">
        <div className="flex min-w-0 flex-1 flex-col">
          <div className="flex h-[19px] items-center justify-end bg-[#282828] pr-[11px] text-[#c4c4c4]">
            <Dots />
          </div>
          <SceneToolbar />
          <SceneCanvas />
          <ProjectPanel />
        </div>
        <Inspector />
      </main>
      <StatusBar />
      <Callout />
    </div>
  );
}
